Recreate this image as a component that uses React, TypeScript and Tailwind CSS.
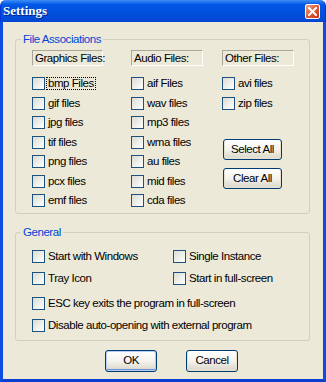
import React from 'react';

const font = "font-['Liberation_Sans',Arial,sans-serif] text-[11.5px] tracking-[-0.45px] text-black";

function Box() {
  return (
    <span className="w-[13px] h-[13px] shrink-0 border border-[#1c5180] bg-linear-to-br from-[#dcdcd4] to-white" />
  );
}

function Check({ label, focus = false, h = 'h-[19.5px]' }: { label: string; focus?: boolean; h?: string }) {
  return (
    <div className={`flex items-start ${h}`}>
      <Box />
      <span
        className={`ml-[1px] px-[1px] border leading-[11px] whitespace-nowrap ${
          focus ? 'border-dotted border-black' : 'border-transparent'
        }`}
      >
        {label}
      </span>
    </div>
  );
}

function Header({ label, w }: { label: string; w: string }) {
  return (
    <div
      className={`${w} h-[16px] pl-[2px] leading-[14px] border-t border-l border-[#aca899] border-b border-r border-b-white border-r-white whitespace-nowrap`}
    >
      {label}
    </div>
  );
}

function Btn({ label, w, h, def = false }: { label: string; w: string; h: string; def?: boolean }) {
  return (
    <button
      className={`${w} ${h} rounded-[3px] border border-[#003c74] bg-linear-to-b from-white via-[#f4f3ee] to-[#d8d4c6] flex items-center justify-center ${
        def ? 'shadow-[inset_0_0_0_1px_#b3cdf3,inset_0_-1px_0_1px_#6d94d8]' : 'shadow-[inset_0_-1px_0_1px_#e3e0d2]'
      }`}
    >
      {label}
    </button>
  );
}

function Legend({ label }: { label: string }) {
  return (
    <div className="-mt-[7px] ml-[5px] px-[2px] w-fit bg-[#ece9d8] leading-[13px] text-[#0046d5]">
      {label}
    </div>
  );
}

export default function App() {
  const graphics = ['gif files', 'jpg files', 'tif files', 'png files', 'pcx files', 'emf files'];
  const audio = ['aif Files', 'wav files', 'mp3 files', 'wma files', 'au files', 'mid files', 'cda files'];

  return (
    <div className={`w-[326px] h-[382px] flex flex-col ${font}`}>
      {/* title bar */}
      <div className="h-[22px] shrink-0 flex items-center rounded-t-[6px] bg-linear-to-b from-[#3d8ff6] via-[#0058e6] via-20% to-[#0047d2] border-x-[1px] border-[#0831d9]">
        <span className="ml-[2px] font-['Liberation_Serif',serif] font-bold text-[13px] tracking-normal text-white [text-shadow:1px_1px_0_#0a1e80]">
          Settings
        </span>
        <span className="ml-auto mr-[5px] w-[15px] h-[15px] rounded-[2px] border border-white bg-linear-to-br from-[#f0a080] via-[#e05a34] to-[#c4381a] flex items-center justify-center">
          <svg width="9" height="9" viewBox="0 0 9 9">
            <path d="M1 1 L8 8 M8 1 L1 8" stroke="white" strokeWidth="2" strokeLinecap="square" />
          </svg>
        </span>
      </div>

      {/* client area */}
      <div className="flex-1 flex flex-col bg-[#ece9d8] border-x-[3px] border-b-[3px] border-x-[#0b4de0] border-b-[#0a3fd0]">
        {/* File Associations */}
        <div className="ml-[12px] mt-[17px] w-[295px] h-[175px] border border-[#d0d0bf] rounded-[3px]">
          <Legend label="File Associations" />
          <div className="mt-[4px] pl-[16px] flex">
            <div className="w-[99px] flex flex-col">
              <Header label="Graphics Files:" w="w-[71px]" />
              <div className="mt-[11px] flex flex-col">
                <Check label="bmp Files" focus />
                {graphics.map((g) => (
                  <Check key={g} label={g} />
                ))}
              </div>
            </div>
            <div className="w-[91px] flex flex-col">
              <Header label="Audio Files:" w="w-[72px]" />
              <div className="mt-[11px] flex flex-col">
                {audio.map((a) => (
                  <Check key={a} label={a} />
                ))}
              </div>
            </div>
            <div className="flex flex-col">
              <Header label="Other Files:" w="w-[72px]" />
              <div className="mt-[11px] flex flex-col">
                <Check label="avi files" />
                <Check label="zip files" />
              </div>
              <div className="mt-[23px] ml-[1px] flex flex-col gap-[8px]">
                <Btn label="Select All" w="w-[59px]" h="h-[21px]" />
                <Btn label="Clear All" w="w-[59px]" h="h-[21px]" />
              </div>
            </div>
          </div>
        </div>

        {/* General */}
        <div className="ml-[12px] mt-[18px] w-[295px] h-[109px] border border-[#d0d0bf] rounded-[3px]">
          <Legend label="General" />
          <div className="mt-[11px] pl-[16px] grid grid-cols-[141px_1fr]">
            <Check label="Start with Windows" h="h-[22px]" />
            <Check label="Single Instance" h="h-[22px]" />
            <Check label="Tray Icon" h="h-[25px]" />
            <Check label="Start in full-screen" h="h-[25px]" />
            <div className="col-span-2">
              <Check label="ESC key exits the program in full-screen" h="h-[22px]" />
            </div>
            <div className="col-span-2">
              <Check label="Disable auto-opening with external program" h="h-[22px]" />
            </div>
          </div>
        </div>

        {/* buttons */}
        <div className="mt-[9px] ml-[102px] flex gap-[29px]">
          <Btn label="OK" w="w-[52px]" h="h-[22px]" def />
          <Btn label="Cancel" w="w-[52px]" h="h-[22px]" />
        </div>
      </div>
    </div>
  );
}
